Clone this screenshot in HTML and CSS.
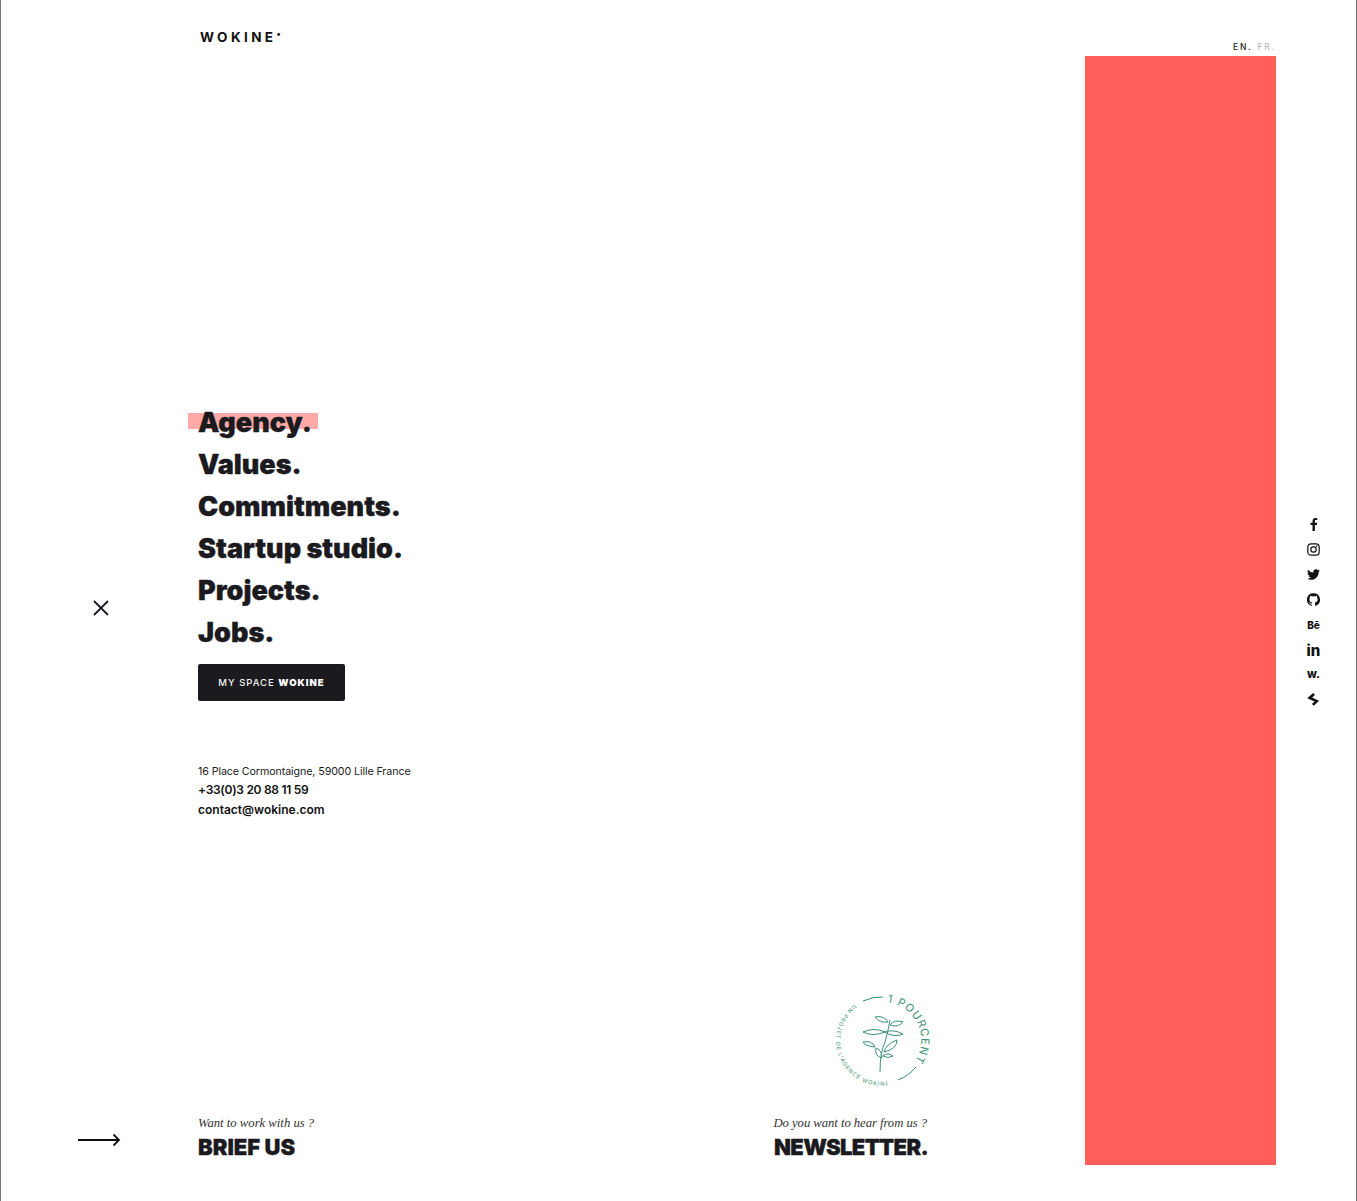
FILE: index.html
```html
<!DOCTYPE html>
<html lang="en">
<head>
<meta charset="utf-8">
<title>Wokine</title>
<link rel="stylesheet" href="styles.css">
</head>
<body>
<div class="page">
  <aside class="gutter">
    <svg class="close-icon" width="18" height="18" viewBox="0 0 18 18"><path d="M2 2l14 14M16 2L2 16" stroke="#1b1a1f" stroke-width="1.800" fill="none"/></svg>
    <svg class="arrow-icon" width="44" height="14" viewBox="0 0 44 14"><path d="M1 7h41M36.500 1.500L42 7l-5.500 5.500" stroke="#111" stroke-width="1.800" fill="none"/></svg>
  </aside>

  <main class="content">
    <div class="logo">WOKINE<sup class="logo-dot">•</sup></div>
    <nav class="menu">
      <a class="menu-item is-active"><span class="menu-label">Agency.</span></a>
      <a class="menu-item"><span class="menu-label">Values.</span></a>
      <a class="menu-item"><span class="menu-label">Commitments.</span></a>
      <a class="menu-item"><span class="menu-label">Startup studio.</span></a>
      <a class="menu-item"><span class="menu-label">Projects.</span></a>
      <a class="menu-item"><span class="menu-label">Jobs.</span></a>
    </nav>
    <a class="space-btn">MY SPACE <b>WOKINE</b></a>
    <address class="contact">
      <div class="contact-address">16 Place Cormontaigne, 59000 Lille France</div>
      <div class="contact-strong contact-phone">+33(0)3 20 88 11 59</div>
      <div class="contact-strong">contact@wokine.com</div>
    </address>
    <div class="footer-row">
      <div class="cta">
        <div class="cta-small">Want to work with us ?</div>
        <div class="cta-big">BRIEF US</div>
      </div>
      <div class="cta cta-right">
        <svg class="stamp" width="100" height="96" viewBox="0 0 100 96">
          <defs>
            <path id="arc-top" d="M55.400 12.400A38 38 0 0 1 77.600 77.600"/>
            <path id="arc-bottom" d="M22.300 14.500A45 45 0 0 0 70 90.500"/>
          </defs>
          <text class="stamp-big"><textPath href="#arc-top">1 POURCENT</textPath></text>
          <text class="stamp-small"><textPath href="#arc-bottom">UN PROJET DE L'AGENCE WOKINE</textPath></text>
          <g fill="none" stroke="#3c8f73" stroke-width="1">
            <path d="M31 11A43 43 0 0 1 51 7M66 90A43 43 0 0 0 84 77"/>
            <path d="M48 82Q48 62 53 52Q56 42 58 30"/>
            <path d="M56 32Q47 33 43 27Q52 25 56 32Z"/>
            <path d="M58 35Q66 38 71 32Q62 29 58 35Z"/>
            <path d="M53 42Q40 47 31 42Q42 37 53 42Z"/>
            <path d="M53 42Q62 48 71 44Q62 39 53 42Z"/>
            <path d="M43 57Q33 56 31 52Q40 50 43 57Z"/>
            <path d="M52 62Q54 54 65 50Q65 59 52 62Z"/>
            <path d="M50 68Q42 66 44 58Q50 60 50 68Z"/>
            <path d="M51 66Q56 62 61 66Q56 69 51 66Z"/>
          </g>
        </svg>
        <div class="cta-small cta-small-right">Do you want to hear from us ?</div>
        <div class="cta-big cta-news">NEWSLETTER.</div>
      </div>
    </div>
  </main>

  <section class="visual">
    <div class="lang"><span>EN.</span> <span class="lang-off">FR.</span></div>
    <div class="panel"></div>
  </section>

  <aside class="social">
    <svg class="s-icon" viewBox="0 0 24 24"><path d="M14.500 24V13h3.700l.6-4.300h-4.300V6c0-1.200.4-2.100 2.100-2.100h2.300V.1C18.500.1 17.100 0 15.700 0 12.500 0 10.200 2 10.200 5.600v3.100H6.500V13h3.700v11z"/></svg>
    <svg class="s-icon" viewBox="0 0 24 24"><rect x="1.500" y="1.500" width="21" height="21" rx="6" fill="none" stroke="#111" stroke-width="2.200"/><circle cx="12" cy="12" r="5" fill="none" stroke="#111" stroke-width="2.200"/><circle cx="18" cy="6" r="1.500"/></svg>
    <svg class="s-icon" viewBox="0 0 24 24"><path d="M23.950 4.570a10 10 0 0 1-2.820.77 4.960 4.960 0 0 0 2.160-2.720c-.95.55-2 .95-3.120 1.170a4.920 4.920 0 0 0-8.380 4.480C7.690 8.100 4.070 6.130 1.640 3.160a4.820 4.820 0 0 0-.67 2.480c0 1.710.87 3.200 2.190 4.100a4.900 4.900 0 0 1-2.230-.61v.06a4.920 4.920 0 0 0 3.950 4.830 5 5 0 0 1-2.210.08 4.940 4.940 0 0 0 4.600 3.420A9.870 9.870 0 0 1 0 19.540a13.940 13.940 0 0 0 7.550 2.210c9.060 0 14-7.500 14-13.980 0-.21 0-.42-.01-.63a9.940 9.940 0 0 0 2.410-2.570z"/></svg>
    <svg class="s-icon" viewBox="0 0 24 24"><path d="M12 .3a12 12 0 0 0-3.790 23.400c.6.11.82-.26.82-.58v-2.030c-3.340.73-4.040-1.610-4.040-1.610-.55-1.390-1.340-1.760-1.340-1.760-1.090-.74.08-.73.08-.73 1.200.09 1.840 1.240 1.840 1.240 1.070 1.830 2.810 1.300 3.500 1 .1-.78.42-1.300.76-1.600-2.670-.31-5.470-1.340-5.470-5.940 0-1.310.47-2.380 1.240-3.220-.14-.3-.54-1.520.1-3.180 0 0 1-.32 3.300 1.230a11.500 11.500 0 0 1 6 0c2.280-1.550 3.290-1.230 3.290-1.230.64 1.660.24 2.880.12 3.180a4.650 4.650 0 0 1 1.230 3.220c0 4.610-2.800 5.630-5.480 5.920.42.36.81 1.100.81 2.220v3.290c0 .32.22.7.82.58A12 12 0 0 0 12 .3"/></svg>
    <span class="s-text s-be">Bē</span>
    <span class="s-text s-in">in</span>
    <span class="s-text s-w">w.</span>
    <svg class="s-icon" viewBox="0 0 24 24"><path d="M13 2L5 9l13 6-7 7" fill="none" stroke="#111" stroke-width="5"/></svg>
  </aside>
</div>
</body>
</html>
```

FILE: styles.css
```css
* { box-sizing: border-box; }
html, body { margin: 0; padding: 0; background: #fff; }
body { font-family: "Inter", "Liberation Sans", sans-serif; color: #1b1a1f; }

.page {
  display: grid;
  grid-template-columns: 197px 1fr 191px 80px;
  height: 1201px;
  border-left: 1px solid #777;
  border-right: 1px solid #777;
  overflow: hidden;
}

.gutter {
  display: flex;
  flex-direction: column;
  align-items: flex-start;
  padding-top: 599px;
}
.close-icon { margin-left: 91px; }
.arrow-icon { margin-left: 76px; margin-top: 516px; }

.content {
  display: flex;
  flex-direction: column;
  align-items: flex-start;
  isolation: isolate;
}

.logo {
  margin: 29px 0 0 2px;
  height: 16px;
  font-size: 13.500px;
  line-height: 16px;
  font-weight: 700;
  letter-spacing: 3.400px;
  color: #111;
}
.logo-dot { font-size: 9px; line-height: 0; vertical-align: 5px; letter-spacing: 0; margin-left: 0; }

.menu { display: flex; flex-direction: column; margin-top: 357px; }
.menu-item {
  height: 42px;
  font-size: 27px;
  line-height: 42px;
  font-weight: 900;
  letter-spacing: 0;
  color: #1b1a1f;
  -webkit-text-stroke: 0.300px #1b1a1f;
}
.menu-label { position: relative; display: inline-block; }
.is-active .menu-label::before {
  content: "";
  position: absolute;
  left: -10px;
  width: 130px;
  top: 11px;
  height: 16px;
  background: #ffaaa8;
  z-index: -1;
}

.space-btn {
  display: flex;
  align-items: center;
  justify-content: center;
  width: 147px;
  height: 37px;
  margin-top: 10px;
  background: #1b1a1f;
  border-radius: 2px;
  color: #f2f2f2;
  font-size: 9.500px;
  font-weight: 500;
  letter-spacing: 1px;
  white-space: pre;
}
.space-btn b { font-weight: 900; color: #fff; }

.contact { margin-top: 63px; font-style: normal; color: #111; }
.contact-address { font-size: 10.700px; line-height: 16px; letter-spacing: -0.100px; color: #222; }
.contact-strong { font-size: 12px; line-height: 20px; font-weight: 600; letter-spacing: 0; }
.contact-phone { letter-spacing: -0.300px; }

.footer-row {
  margin-top: auto;
  margin-bottom: 39px;
  display: flex;
  justify-content: space-between;
  align-items: flex-end;
  width: 730px;
}
.cta { display: flex; flex-direction: column; align-items: flex-start; }
.cta-right { align-items: flex-end; }
.cta-small {
  font-family: "Liberation Serif", serif;
  font-style: italic;
  font-size: 12.700px;
  line-height: 16px;
  letter-spacing: 0;
  color: #333;
}
.cta-small-right { letter-spacing: -0.050px; padding-right: 1px; }
.cta-big {
  margin-top: 1px;
  font-size: 22px;
  line-height: 30px;
  font-weight: 900;
  letter-spacing: 0;
  color: #1b1a1f;
  -webkit-text-stroke: 0.300px #1b1a1f;
}
.cta-news { letter-spacing: -0.650px; }

.stamp { margin-bottom: 29px; margin-right: -4px; }
.stamp-big { font-size: 11px; letter-spacing: 1px; fill: #3c8f73; }
.stamp-small { font-size: 5.500px; letter-spacing: 1.050px; fill: #3c8f73; }

.visual { display: flex; flex-direction: column; }
.lang {
  height: 56px;
  padding-top: 41px;
  text-align: right;
  font-size: 8.500px;
  line-height: 12px;
  font-weight: 500;
  letter-spacing: 1.800px;
  color: #222;
}
.lang-off { color: #b9b9b9; margin-left: 1px; }
.panel { height: 1109px; background: #ff5f58; }

.social {
  display: flex;
  flex-direction: column;
  align-items: center;
  padding-top: 512px;
  padding-right: 5px;
}
.s-icon { display: block; width: 13px; height: 13px; margin: 6px 0; fill: #111; flex: none; }
.s-text {
  display: flex;
  align-items: center;
  justify-content: center;
  height: 25px;
  font-weight: 800;
  color: #111;
}
.s-be { font-size: 10px; }
.s-in { font-size: 15px; padding-top: 1px; }
.s-w { font-size: 11.500px; padding-bottom: 1px; }
```
